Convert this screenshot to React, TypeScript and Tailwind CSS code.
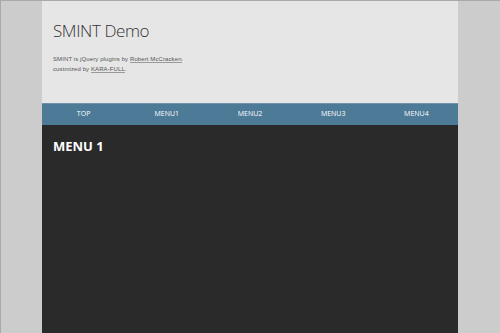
export default function App() {
  return (
    <div className="min-h-[333px] h-[333px] overflow-hidden bg-[#cccccc] border-t border-l border-[#a9a9a9]">
      <div className="ml-[41px] w-[416px] h-full flex flex-col">
        <header className="h-[102px] bg-[#e6e6e6] pl-[11px] pt-[18px]">
          <h1 className="font-['Open_Sans',sans-serif] font-light text-[17px] leading-[24px] tracking-[-0.4px] text-[#333]">SMINT Demo</h1>
          <p className="mt-[11px] font-['Liberation_Sans',Arial,sans-serif] text-[6px] leading-[10px] tracking-[0.1px] text-[#555]">
            SMINT is jQuery plugins by{" "}
            <a className="border-b border-[#999] text-[#555]">Robert McCracken</a>.
            <br />
            custmized by <a className="border-b border-[#999] text-[#555]">KARA-FULL</a>.
          </p>
        </header>
        <nav className="h-[22px] bg-[#4d7a96] border-t border-[#6d93ab] grid grid-cols-5 items-center">
          {["TOP", "MENU1", "MENU2", "MENU3", "MENU4"].map((m) => (
            <a key={m} className="text-center font-['Open_Sans',sans-serif] text-[7px] text-white">
              {m}
            </a>
          ))}
        </nav>
        <section className="flex-1 bg-[#2a2a2a] pl-[11px] pt-[12px]">
          <h2 className="font-['Open_Sans',sans-serif] font-bold text-[13px] leading-[18px] text-white">MENU 1</h2>
        </section>
      </div>
    </div>
  );
}
